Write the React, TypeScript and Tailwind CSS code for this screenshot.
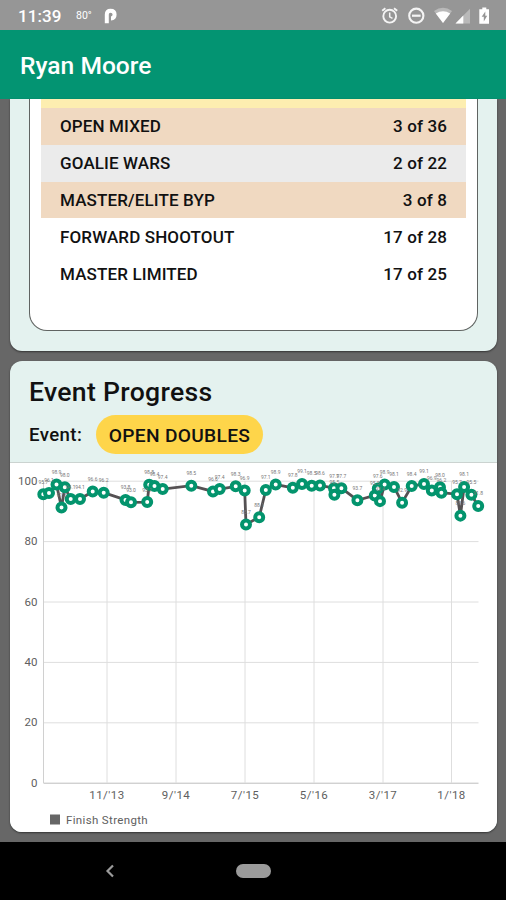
import type { ReactNode } from "react";

const results = [
  { event: "OPEN MIXED", place: "3 of 36", color: "bg-[#f0d9c1]" },
  { event: "GOALIE WARS", place: "2 of 22", color: "bg-[#ebebeb]" },
  { event: "MASTER/ELITE BYP", place: "3 of 8", color: "bg-[#f0d9c1]" },
  { event: "FORWARD SHOOTOUT", place: "17 of 28", color: "bg-white" },
  { event: "MASTER LIMITED", place: "17 of 25", color: "bg-white" },
];

// x offset in the chart, finish strength
const points = [
  [33.3, 95.7], [39, 96.1], [46.5, 98.9], [51.5, 91.3], [54.8, 98.0],
  [60.7, 94.1], [70, 94.1], [82.7, 96.6], [93.7, 96.2], [115.5, 93.8],
  [121, 93.0], [137.2, 93.1], [139.2, 98.8], [144.5, 98.4], [152.7, 97.4],
  [181.3, 98.5], [203, 96.6], [209.7, 97.4], [225.7, 98.3], [234.7, 96.9],
  [236, 85.7], [249.2, 88.1], [255.8, 97.1], [265.7, 98.9], [282.8, 97.8],
  [292, 99.1], [301.7, 98.5], [310, 98.6], [324, 97.7], [324.4, 95.5],
  [331.4, 97.7], [347.4, 93.7], [364.8, 95.3], [367.8, 97.6], [370, 93.4],
  [374.6, 98.9], [384, 98.1], [392.1, 92.9], [401.7, 98.4], [414, 99.1],
  [421.8, 96.9], [430, 98.0], [431.4, 96.2], [447, 95.7], [450.4, 88.6],
  [454.1, 98.1], [461.4, 95.5], [468.2, 91.8],
];

const months = [
  { label: "11/'13", x: 97 },
  { label: "9/'14", x: 166 },
  { label: "7/'15", x: 235 },
  { label: "5/'16", x: 304 },
  { label: "3/'17", x: 373 },
  { label: "1/'18", x: 441.5 },
];

const toY = (value: number) => 320.2 - value * 3.02;

const StatusBar = () => (
  <div className="flex h-[30px] shrink-0 items-center justify-between bg-[#969696] pl-[18px] pr-[17px] pt-px text-white">
    <div className="flex items-center">
      <span className="w-[58px] text-[17px] font-medium leading-[30px] tracking-[0.1px]">
        11:39
      </span>
      <span className="w-[28px] text-[10.5px] leading-[30px]">80°</span>
      <svg width="14" height="16" viewBox="0 0 14 16">
        <path
          d="M2.8 15.3V6.4Q2.8 2.8 6.4 2.8Q10.6 2.8 10.6 6.6T7 10.4"
          fill="none"
          stroke="white"
          strokeWidth="4"
          strokeLinejoin="round"
        />
      </svg>
    </div>
    <svg width="108" height="20" viewBox="0 0 108 20">
      <g fill="none" stroke="#f4f4f4" strokeWidth="1.9">
        <circle cx="8.7" cy="10.2" r="6.4" />
        <path d="M8.7 6.6v4.2l2.8 1.6" strokeWidth="1.5" />
        <path d="M1.2 4.8 4.4 2.2M16.2 4.8 13 2.2" />
        <circle cx="35.3" cy="9.7" r="7.1" strokeWidth="2.1" />
        <path d="M31 9.7h8.6" strokeWidth="2.2" />
      </g>
      <path d="M53 5Q62 -1.5 71 5L62 17Z" fill="#b9b9b9" />
      <path d="M54.8 7.5Q62 3.1 69.2 7.5L62 17Z" fill="white" />
      <path d="M89 2.7V17.5H74.5Z" fill="#b9b9b9" />
      <path d="M82.3 9.5V17.5H74.5Z" fill="white" />
      <path d="M98.3 3.3h3V1.6h4V3.3h3v14.4h-10Z" fill="white" />
      <path d="m104.3 5.5-3.6 5.3h2.1V15.5l3.4-5.7h-1.9Z" fill="#969696" />
    </svg>
  </div>
);

const ProgressChart = () => (
  <svg
    className="block"
    width="487"
    height="369"
    viewBox="0 0 487 369"
    fill="#606060"
    fontSize="11.5"
  >
    <g stroke="#dedede" strokeWidth="1">
      {[0, 20, 40, 60, 80, 100].map((value) => (
        <path
          key={value}
          d={`M33.5 ${toY(value)}H468.5`}
          stroke={value === 0 ? "#bdbdbd" : "#dedede"}
        />
      ))}
      <path d="M33.5 18V320" stroke="#d0d0d0" />
      {months.map(({ label, x }) => (
        <path key={label} d={`M${x} 18V320`} />
      ))}
    </g>
    {[0, 20, 40, 60, 80, 100].map((value) => (
      <text key={value} x="27.5" y={toY(value) + 3.5} textAnchor="end">
        {value}
      </text>
    ))}
    {months.map(({ label, x }) => (
      <text key={label} x={x} y="336" textAnchor="middle" letterSpacing="0.5">
        {label}
      </text>
    ))}
    <polyline
      points={points.map(([x, value]) => `${x},${toY(value)}`).join(" ")}
      fill="none"
      stroke="#555153"
      strokeWidth="2.8"
    />
    {points.map(([x, value], i) => (
      <circle
        key={i}
        cx={x}
        cy={toY(value)}
        r="4"
        fill="white"
        stroke="#03946d"
        strokeWidth="4"
      />
    ))}
    {points.map(([x, value], i) => (
      <text
        key={i}
        x={x}
        y={toY(value) - 10.5}
        textAnchor="middle"
        fontSize="5"
        fill="#777777"
      >
        {value.toFixed(1)}
      </text>
    ))}
    <rect x="40" y="351.5" width="10" height="10" fill="#666666" />
    <text x="56" y="361" letterSpacing="0.35">
      Finish Strength
    </text>
  </svg>
);

type CardProps = {
  className: string;
  children: ReactNode;
};

const Card = ({ className, children }: CardProps) => (
  <section
    className={`overflow-hidden bg-[#e4f2ef] shadow-[0_1px_2px_rgba(0,0,0,0.5)] ${className}`}
  >
    {children}
  </section>
);

export default function App() {
  return (
    <div className="flex h-[900px] w-[506px] flex-col overflow-hidden bg-[#676767] font-['Roboto',sans-serif] text-[#111111]">
      <StatusBar />
      <header className="flex h-[69px] shrink-0 items-center bg-[#039472] px-5 pt-[3px]">
        <h1 className="text-[24.6px] font-medium text-white">Ryan Moore</h1>
      </header>
      <main className="flex h-[743px] shrink-0 flex-col gap-[10px] pl-[10px] pr-[9px]">
        <Card className="h-[252px] shrink-0 rounded-b-xl px-[19px]">
          <div className="h-[232px] rounded-b-[18px] border border-t-0 border-[#606462] bg-white px-[11px]">
            <div className="h-[9px] bg-[#fdeeb0]" />
            {results.map(({ event, place, color }) => (
              <div
                key={event}
                className={`flex h-[36.8px] items-center justify-between px-[19px] pt-[1.4px] text-[17px] font-medium tracking-[0.13px] ${color}`}
              >
                <span>{event}</span>
                <span>{place}</span>
              </div>
            ))}
          </div>
        </Card>
        <Card className="h-[471px] shrink-0 rounded-xl">
          <div className="h-[101px] px-[19px] pt-[13px]">
            <h2 className="text-[26.6px] font-medium leading-9 tracking-[0.3px]">
              Event Progress
            </h2>
            <div className="mt-[5px] flex items-center gap-[12px]">
              <span className="w-[55px] pt-[3px] text-[18.6px] font-medium tracking-[0.4px]">
                Event:
              </span>
              <button className="h-[39px] w-[167px] rounded-full bg-[#fed54a] pt-[3px] text-[19.2px] font-medium tracking-[0.3px]">
                OPEN DOUBLES
              </button>
            </div>
          </div>
          <div className="border-t border-[#cbd3d0] bg-white">
            <ProgressChart />
          </div>
        </Card>
      </main>
      <nav className="flex grow items-center bg-black pl-[105px]">
        <svg width="10" height="14" viewBox="0 0 10 14">
          <path d="M8 1.5 2.5 7 8 12.5" fill="none" stroke="#9b9b9b" strokeWidth="2.2" />
        </svg>
        <div className="ml-[121px] h-[14px] w-[35px] rounded-full bg-[#9b9b9b]" />
      </nav>
    </div>
  );
}
